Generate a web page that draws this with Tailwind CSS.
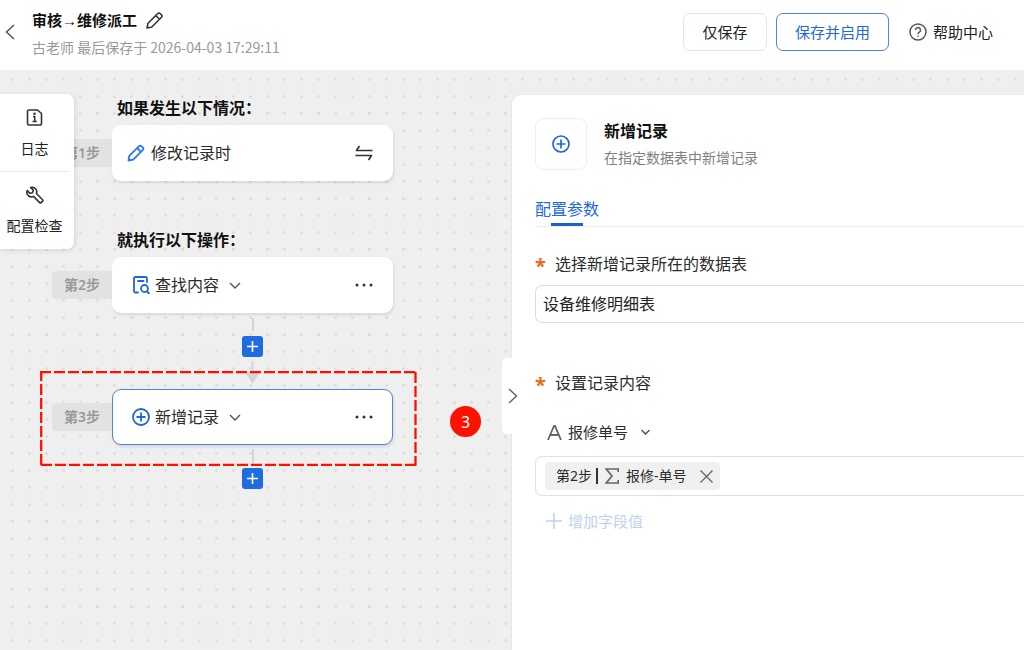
<!DOCTYPE html>
<html lang="zh-CN">
<head>
<meta charset="utf-8">
<meta name="viewport" content="width=device-width, initial-scale=1">
<title>审核→维修派工</title>
<script src="https://cdn.jsdelivr.net/npm/@tailwindcss/browser@4"></script>
</head>
<body class="flex min-h-screen flex-col bg-white font-['Noto_Sans','Noto_Sans_CJK_SC',sans-serif] text-base leading-6 text-[#2b2b2b]">

<header class="flex h-[70px] shrink-0 items-center bg-white pr-[31px]">
  <button type="button" aria-label="返回" class="flex w-8 items-center pl-[5px] text-[#555]">
    <svg class="mt-[-6px] h-4 w-[10px]" viewBox="0 0 10 16" fill="none" stroke="currentColor" stroke-width="1.5"><path d="M9 1 1.5 8 9 15"/></svg>
  </button>
  <div class="flex flex-1 flex-col pb-[5px]">
    <div class="flex h-7 items-center gap-[9px]">
      <h1 class="font-['Noto_Sans_CJK_SC',sans-serif] text-[15px] font-bold text-[#111]">审核<span class="font-['Liberation_Sans'] font-normal">→</span>维修派工</h1>
      <button type="button" aria-label="重命名" class="text-[#333]">
        <svg class="size-[17px]" viewBox="0 0 17 17" fill="none" stroke="currentColor" stroke-width="1.600" stroke-linejoin="round"><path d="M1 16l1-4.800L11.500 1.700a2 2 0 0 1 2.800 0l1 1a2 2 0 0 1 0 2.800L5.800 15zM9.700 3.500l3.800 3.800"/></svg>
      </button>
    </div>
    <p class="font-['Noto_Sans_CJK_SC',sans-serif] text-sm leading-6 text-[#999]">古老师 最后保存于 2026-04-03 17:29:11</p>
  </div>
  <div class="flex h-full items-start gap-[9px] pt-[13px] text-[15px]">
    <button type="button" class="h-[38px] w-[84px] rounded-[7px] border border-[#e3e3e3] text-[#222]">仅保存</button>
    <button type="button" class="h-[38px] w-[113px] rounded-[7px] border border-[#4a83e0] text-[#2268d8]">保存并启用</button>
    <a href="#help" class="ml-[11px] flex h-[38px] items-center gap-[6px] text-[#222]">
      <svg class="size-[18px] text-[#555]" viewBox="0 0 18 18" fill="none" stroke="currentColor" stroke-width="1.500"><circle cx="9" cy="9" r="8"/><path d="M6.500 7a2.500 2.500 0 1 1 3.800 2.100C9.300 9.700 9 10 9 11.200"/><circle cx="9" cy="13.200" r=".5" fill="currentColor" stroke-width=".6"/></svg>
      帮助中心
    </a>
  </div>
</header>

<main class="relative flex flex-1 bg-[#efefef] bg-[radial-gradient(circle_at_50%_50%,#dedede_1px,transparent_2px)] bg-[length:17px_17px] bg-[position:4px_1px]">

  <section class="relative w-[512px] shrink-0 pt-[26px]">
    <h2 class="pl-[117px] font-bold text-[#111]">如果发生以下情况：</h2>
    <div class="mt-[5px] flex items-center pl-[52px]">
      <span class="flex h-7 w-[60px] items-center justify-center rounded-l-[4px] bg-[#e2e2e2] text-sm font-semibold text-[#999]">第1步</span>
      <div class="flex h-14 w-[281px] items-center rounded-[9px] bg-white pr-5 pl-[15px] shadow-[1px_2px_3px_rgba(0,0,0,0.1)]">
        <svg class="size-[18px] text-[#2f74f0]" viewBox="0 0 18 18" fill="none" stroke="currentColor" stroke-width="1.800" stroke-linejoin="round"><path d="M1.500 16.500l.8-4.700L11.800 2.300a2 2 0 0 1 2.800 0l1.100 1.100a2 2 0 0 1 0 2.800L6.200 15.700zM10.200 4l3.800 3.800"/></svg>
        <span class="ml-[6px] flex-1">修改记录时</span>
        <button type="button" aria-label="切换" class="text-[#333]">
          <svg class="h-4 w-[18px]" viewBox="0 0 18 16" fill="none" stroke="currentColor" stroke-width="1.700" stroke-linejoin="round"><path d="M17.500 5.500H1.500L4.500 1M.5 10.500h16L13.500 15"/></svg>
        </button>
      </div>
    </div>

    <h2 class="mt-[47px] pl-[117px] font-bold text-[#111]">就执行以下操作：</h2>
    <div class="mt-[5px] flex items-center pl-[52px]">
      <span class="flex h-7 w-[60px] items-center justify-center rounded-l-[4px] bg-[#e2e2e2] text-sm font-semibold text-[#999]">第2步</span>
      <div class="flex h-14 w-[281px] items-center rounded-[9px] bg-white pr-5 pl-5 shadow-[1px_2px_3px_rgba(0,0,0,0.1)]">
        <svg class="size-[18px] text-[#1f66d6]" viewBox="0 0 18 18" fill="none" stroke="currentColor" stroke-width="1.800" stroke-linecap="round"><path d="M6 16.500H3.500a1.500 1.500 0 0 1-1.500-1.500V2.500A1.500 1.500 0 0 1 3.500 1h10A1.500 1.500 0 0 1 15 2.500V6M6 5h5.500M15 15.500l2 2"/><circle cx="12.500" cy="12.500" r="3.500"/></svg>
        <button type="button" class="ml-[5px] flex items-center gap-[10px]">查找内容
          <svg class="h-[7px] w-3 text-[#555]" viewBox="0 0 12 7" fill="none" stroke="currentColor" stroke-width="1.400"><path d="M1 1l5 5 5-5"/></svg>
        </button>
        <button type="button" aria-label="更多" class="ml-auto text-[#333]">
          <svg class="h-4 w-[18px]" viewBox="0 0 18 16" fill="currentColor"><circle cx="2" cy="8" r="1.500"/><circle cx="9" cy="8" r="1.500"/><circle cx="16" cy="8" r="1.500"/></svg>
        </button>
      </div>
    </div>

    <div class="ml-[112px] flex w-[281px] flex-col items-center pt-[5px]">
      <span class="h-[13px] w-[2px] bg-[#d4d4d4]"></span>
      <button type="button" aria-label="添加步骤" class="mt-[5px] flex size-[21px] items-center justify-center rounded-[3px] bg-[#1f6be0] text-white">
        <svg class="size-[11px]" viewBox="0 0 11 11" stroke="currentColor" stroke-width="1.600"><path d="M0 5.500h11M5.500 0v11"/></svg>
      </button>
      <svg class="mt-1 h-[23px] w-[15px]" viewBox="0 0 15 23" fill="#d4d4d4"><path d="M6.500 0h2v11H15L7.500 23 0 11h6.500z"/></svg>
    </div>

    <div class="mt-[5px] flex items-center pl-[52px]">
      <span class="flex h-7 w-[60px] items-center justify-center rounded-l-[4px] bg-[#e2e2e2] text-sm font-semibold text-[#999]">第3步</span>
      <div class="flex h-14 w-[281px] items-center rounded-[9px] border border-[#4a83d8] bg-white pr-[19px] pl-[19px] shadow-[1px_2px_3px_rgba(0,0,0,0.1)]">
        <svg class="size-[18px] text-[#1f66d6]" viewBox="0 0 18 18" fill="none" stroke="currentColor" stroke-width="1.800"><circle cx="9" cy="9" r="8"/><path d="M4.500 9h9M9 4.500v9"/></svg>
        <button type="button" class="ml-[5px] flex items-center gap-[10px]">新增记录
          <svg class="h-[7px] w-3 text-[#555]" viewBox="0 0 12 7" fill="none" stroke="currentColor" stroke-width="1.400"><path d="M1 1l5 5 5-5"/></svg>
        </button>
        <button type="button" aria-label="更多" class="ml-auto text-[#333]">
          <svg class="h-4 w-[18px]" viewBox="0 0 18 16" fill="currentColor"><circle cx="2" cy="8" r="1.500"/><circle cx="9" cy="8" r="1.500"/><circle cx="16" cy="8" r="1.500"/></svg>
        </button>
      </div>
    </div>
    <div class="ml-[112px] flex w-[281px] flex-col items-center pt-1">
      <span class="h-[14px] w-[2px] bg-[#d4d4d4]"></span>
      <button type="button" aria-label="添加步骤" class="mt-[5px] flex size-[21px] items-center justify-center rounded-[3px] bg-[#1f6be0] text-white">
        <svg class="size-[11px]" viewBox="0 0 11 11" stroke="currentColor" stroke-width="1.600"><path d="M0 5.500h11M5.500 0v11"/></svg>
      </button>
    </div>

    <!-- Callout around step 3 -->
    <svg class="pointer-events-none absolute top-[301px] left-[40px] h-[95px] w-[377px]" viewBox="0 0 377 95" fill="none" stroke="#ff1100" stroke-width="2.300" stroke-dasharray="11 3"><path d="M0 1.200h376M375.500 1v94M376 93.800H0M1.200 94V0"/></svg>
    <span class="absolute top-[336px] left-[450px] flex size-[31px] items-center justify-center rounded-full bg-[#ff1100] text-base text-white">3</span>
  </section>

  <!-- Floating tool menu -->
  <nav class="absolute top-6 left-0 w-[74px] rounded-r-[7px] bg-white text-sm text-[#222] shadow-[1px_1px_5px_rgba(0,0,0,0.12)]">
    <button type="button" class="flex h-[78px] w-[69px] flex-col items-center border-b border-[#e8e8e8] pt-[15px]">
      <svg class="size-[17px] text-[#333]" viewBox="0 0 17 17" fill="none" stroke="currentColor" stroke-width="1.600" stroke-linejoin="round"><path d="M3 1h8.500L15.500 4.500V14.500a1.500 1.500 0 0 1-1.500 1.500H3a1.500 1.500 0 0 1-1.500-1.500v-12A1.500 1.500 0 0 1 3 1z"/><path d="M7 7.500h1.700V12.500M6.500 12.500h4.300"/><circle cx="8.500" cy="4.800" r=".5" fill="currentColor"/></svg>
      <span class="mt-[13px] leading-5">日志</span>
    </button>
    <button type="button" class="flex h-[77px] w-[69px] flex-col items-center pt-[14px]">
      <svg class="size-[18px] text-[#333]" viewBox="0 0 18 18" fill="none" stroke="currentColor" stroke-width="1.600" stroke-linejoin="round"><path d="M6 1.200A4.600 4.600 0 0 1 10.400 7.500L16.600 13.700a1 1 0 0 1 0 1.400l-1.500 1.500a1 1 0 0 1-1.400 0L7.500 10.400A4.600 4.600 0 0 1 1.200 4.600L4 7.300 6.500 6.800 7.300 4.200 4.500 1.500z"/></svg>
      <span class="mt-3 leading-5">配置检查</span>
    </button>
  </nav>

  <aside class="relative mt-[25px] min-w-0 flex-1 rounded-tl-[9px] bg-white pt-[23px] pl-[23px] shadow-[-1px_0_2px_rgba(0,0,0,0.04)]">
    <button type="button" aria-label="收起面板" class="absolute top-[263px] left-[-10px] flex h-[76px] w-5 items-center rounded-l-[5px] bg-white pl-[6px] text-[#666]">
      <svg class="h-4 w-[10px]" viewBox="0 0 10 16" fill="none" stroke="currentColor" stroke-width="1.500"><path d="M1 1l7.500 7L1 15"/></svg>
    </button>

    <div class="flex gap-[17px]">
      <span class="flex size-[52px] items-center justify-center rounded-[9px] border border-[#eee] text-[#1f66d6]">
        <svg class="size-[18px]" viewBox="0 0 18 18" fill="none" stroke="currentColor" stroke-width="1.700"><circle cx="9" cy="9" r="8"/><path d="M4.500 9h9M9 4.500v9"/></svg>
      </span>
      <div>
        <h2 class="leading-[27px] font-bold text-[#111]">新增记录</h2>
        <p class="text-sm leading-[26px] text-[#808080]">在指定数据表中新增记录</p>
      </div>
    </div>

    <div role="tablist" class="mt-6 flex border-b border-[#eee]">
      <button type="button" role="tab" aria-selected="true" class="flex flex-col items-center text-[#2268d8]">
        <span class="leading-7">配置参数</span>
        <span class="h-[3px] w-8 bg-[#1f60cc]"></span>
      </button>
    </div>

    <form class="flex flex-col">
      <label for="table" class="mt-[25px] flex h-[30px] items-start"><span aria-hidden="true" class="w-5 text-xl leading-7 font-bold text-[#ea6a1a]">*</span>选择新增记录所在的数据表</label>
      <select id="table" class="mt-[3px] h-[38px] w-full appearance-none rounded-l-[7px] border border-r-0 border-[#dcdcdc] bg-white pl-[7px] text-[#222]">
        <option>设备维修明细表</option>
      </select>

      <div class="mt-12 flex h-[30px] items-start"><span aria-hidden="true" class="w-5 text-xl leading-7 font-bold text-[#ea6a1a]">*</span>设置记录内容</div>
      <button type="button" class="mt-[19px] flex h-6 items-center self-start pl-3 text-[15px]">
        <svg class="h-[15px] w-[15px] text-[#666]" viewBox="0 0 15 15" fill="none" stroke="currentColor" stroke-width="1.800"><path d="M1 15 7 1h1l6 14M3.500 10h8"/></svg>
        <span class="ml-[6px]">报修单号</span>
        <svg class="ml-[13px] h-[6px] w-[9px] text-[#555]" viewBox="0 0 9 6" fill="none" stroke="currentColor" stroke-width="1.500"><path d="M.5 1l4 4 4-4"/></svg>
      </button>
      <div class="mt-3 flex h-10 items-center rounded-l-[7px] border border-r-0 border-[#e0e0e0] pl-[9px]">
        <div class="flex h-7 items-center rounded-[4px] bg-[#f0f0f0] pr-[7px] pl-[11px] text-sm">
          <span>第2步</span>
          <span class="ml-1 h-4 w-[2px] bg-[#333]"></span>
          <svg class="ml-[7px] h-4 w-[14px] text-[#666]" viewBox="0 0 14 16" fill="none" stroke="currentColor" stroke-width="1.700"><path d="M13.200 4V1H1.200L7 8l-5.800 7h12v-3"/></svg>
          <span class="ml-[7px]">报修-单号</span>
          <button type="button" aria-label="移除" class="ml-[13px] text-[#666]">
            <svg class="size-[13px]" viewBox="0 0 13 13" stroke="currentColor" stroke-width="1.400"><path d="M.5.5l12 12M12.500.5l-12 12"/></svg>
          </button>
        </div>
      </div>
      <button type="button" class="mt-[13px] flex h-6 items-center gap-[6px] self-start pl-[11px] text-[15px] text-[#bdd2f5]">
        <svg class="size-4" viewBox="0 0 16 16" stroke="currentColor" stroke-width="1.600"><path d="M0 8h16M8 0v16"/></svg>
        增加字段值
      </button>
    </form>
  </aside>
</main>
</body>
</html>
